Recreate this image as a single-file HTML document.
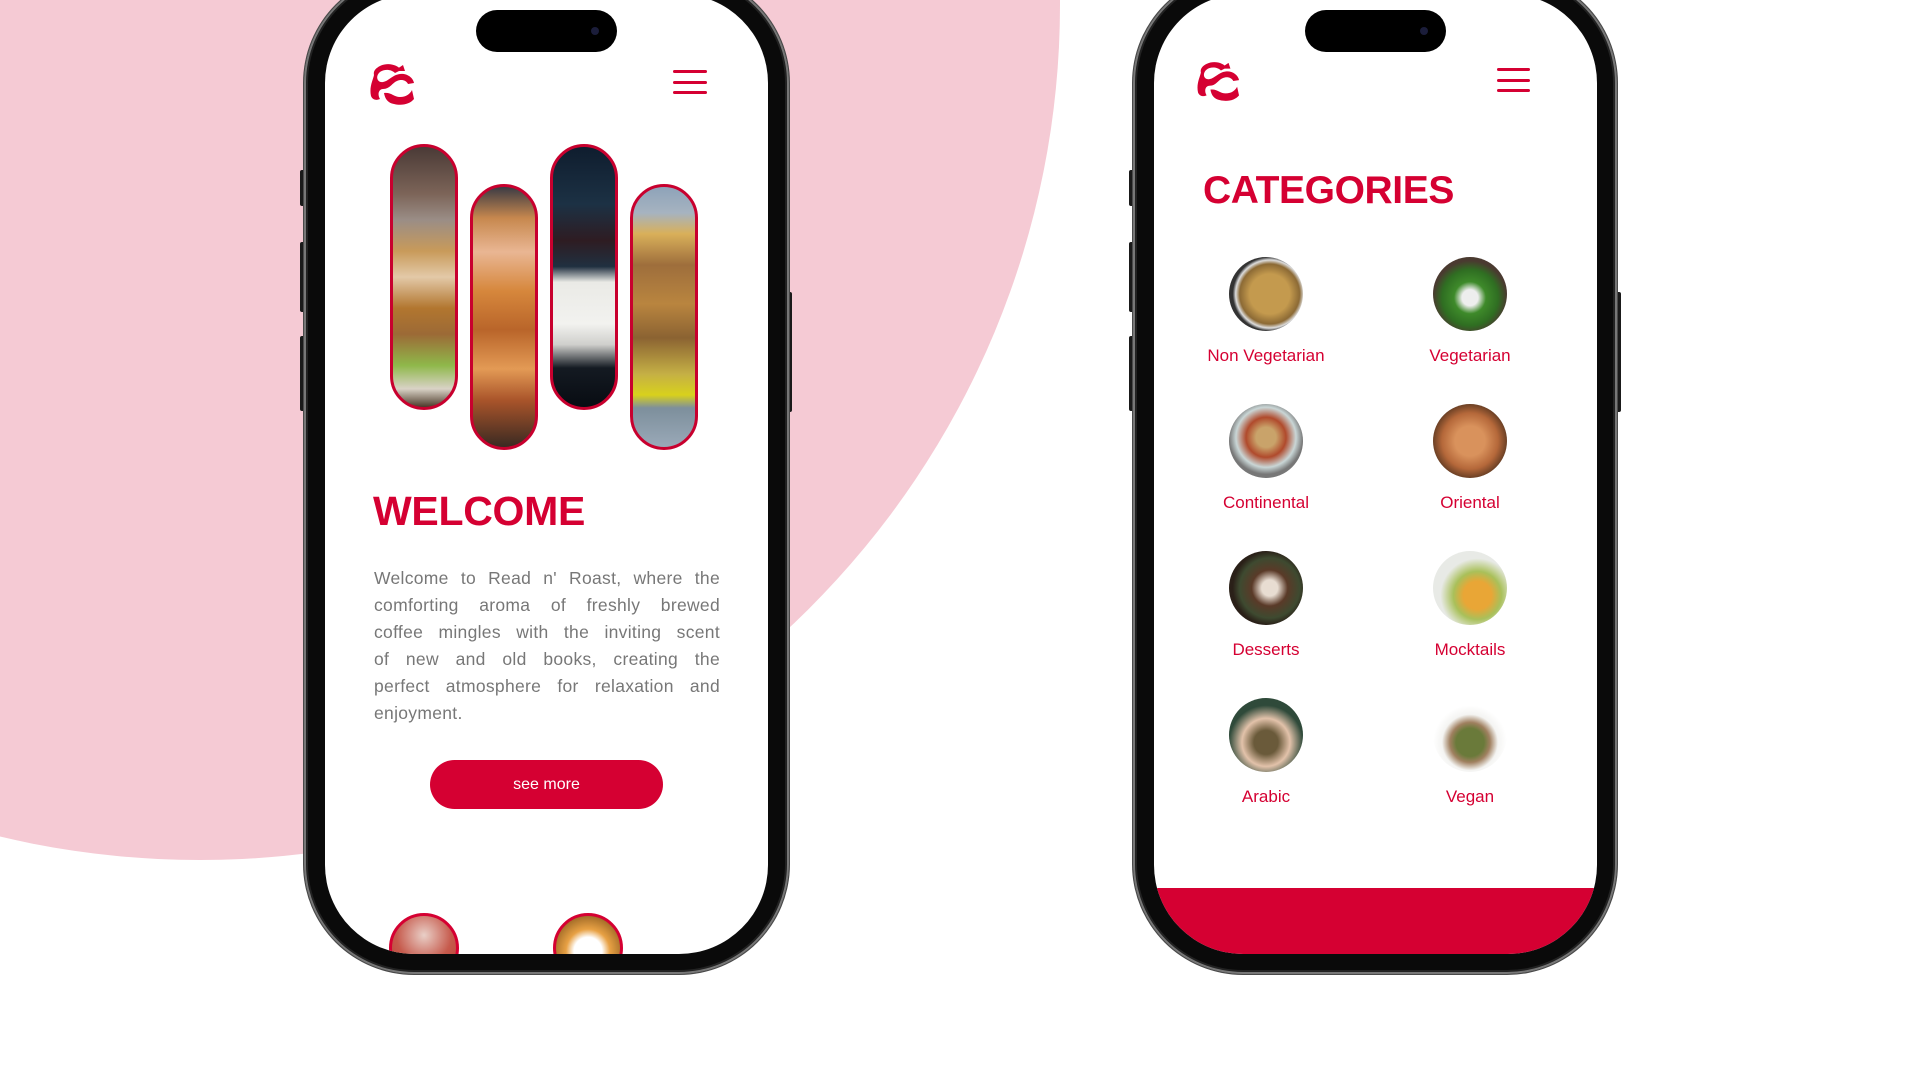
<!DOCTYPE html>
<html><head><meta charset="utf-8"><style>
*{margin:0;padding:0;box-sizing:border-box}
body{width:1920px;height:1080px;background:#fff;position:relative;overflow:hidden;font-family:"Liberation Sans",sans-serif}
.blob{position:absolute;left:-660px;top:-850px;width:1720px;height:1710px;border-radius:50%;background:#f5cad4}
.phone{position:absolute;top:-27px;height:1001px;border-radius:110px;background:#0a0a0a;box-shadow:0 0 0 1px #4a4a4a, inset 0 0 0 2px #777, inset 0 0 0 4px #222}
.screen{position:absolute;top:-6px;height:960px;width:443px;border-radius:89px;background:#fff;overflow:hidden}
.notch{position:absolute;width:141px;height:42px;border-radius:21px;background:#000;top:10px}
.notch i{position:absolute;right:18px;top:17px;width:8px;height:8px;border-radius:50%;background:#1b1d3a}
.btn{position:absolute;background:#1a1a1a;width:5px;border-radius:2px}
.abs{position:absolute}
.ham{position:absolute;width:34px}
.ham b{display:block;height:3px;background:#d50032;border-radius:2px;margin-bottom:7.5px}
.pill{position:absolute;width:68px;height:266px;border-radius:34px;border:3px solid #c8002e;overflow:hidden}
h1{position:absolute;color:#d50032;font-weight:bold}
.par{position:absolute;left:374px;top:565px;width:346px;font-size:17.5px;line-height:27px;color:#777;letter-spacing:0.3px}
.par div{text-align:justify;text-align-last:justify;white-space:nowrap}
.par div:last-child{text-align-last:left}
.see{position:absolute;left:430px;top:760px;width:233px;height:49px;border-radius:25px;background:#d50032;color:#fff;font-size:16px;text-align:center;line-height:49px}
.cat{position:absolute;width:74px;height:74px;border-radius:50%}
.lbl{position:absolute;width:220px;text-align:center;color:#d50032;font-size:17px;transform:translateX(-110px)}
.bc{position:absolute;width:70px;height:70px;border-radius:50%;border:3px solid #d50032}
</style></head><body>
<div class="blob"></div>

<!-- left phone -->
<div class="btn" style="left:300px;top:170px;height:36px"></div>
<div class="btn" style="left:300px;top:242px;height:70px"></div>
<div class="btn" style="left:300px;top:336px;height:75px"></div>
<div class="btn" style="left:787px;top:292px;height:120px"></div>
<div class="phone" style="left:304px;width:485px"></div>
<div class="screen" style="left:325px">
  <div class="bc" style="left:64px;top:919px;background:radial-gradient(circle at 50% 30%,#e9cfc7,#c65a4c 50%,#b8332b)"></div>
  <div class="bc" style="left:228px;top:919px;background:radial-gradient(circle at 50% 55%,#fff 0 14px,#e8a144 22px,#8b5a1e 40px)"></div>
</div>
<div class="notch" style="left:476px"><i></i></div>
<svg class="abs" style="left:370px;top:63px" width="46" height="43" viewBox="0 0 46 43"><path d="M10 3C18 -1 28 2 31 7L25 10C21 6 14 6 10 9C5 13 7 20 13 19C19 18 22 12 30 11C36 10 43 14 44 20L38 21C36 17 31 16 27 18C22 20 20 26 13 26C9 26 7 31 10 36C8 37 3 38 1 33C-1 24 3 17 4 12C3 8 6 5 10 3Z M24 8L33 2L35 8Z M14 30C21 29 24 34 30 34C36 34 40 31 42 27L44 36C40 41 32 43 24 41C18 40 15 36 14 30Z" fill="#d50032"/></svg>
<div class="ham" style="left:673px;top:70px"><b></b><b></b><b></b></div>
<div class="pill" style="left:390px;top:144px;background:linear-gradient(180deg,#4a3a36 0%,#7c6458 18%,#9a8d86 28%,#c89a5a 40%,#e3c9a8 50%,#b2762f 62%,#9c6a36 72%,#8fb84a 84%,#d9d2c6 93%,#4c3a2a 100%)"></div>
<div class="pill" style="left:470px;top:184px;background:linear-gradient(180deg,#3b3b44 0%,#c7884e 12%,#e9b693 25%,#d6873c 40%,#b9652a 55%,#e39a55 70%,#a9542a 82%,#3a2a22 100%)"></div>
<div class="pill" style="left:550px;top:144px;background:linear-gradient(180deg,#0f1d2e 0%,#1c3144 22%,#2e1c22 36%,#203040 46%,#eaeae6 52%,#f2f2ef 68%,#cfcfcc 76%,#141a22 85%,#080c12 100%)"></div>
<div class="pill" style="left:630px;top:184px;background:linear-gradient(180deg,#8ea3b9 0%,#a6b3c0 10%,#d9b05a 18%,#9e6e3c 30%,#b9853f 45%,#8b6332 58%,#c5b045 72%,#d8d11c 80%,#7d8f9c 85%,#9aa9b8 100%)"></div>
<h1 style="left:373px;top:488px;font-size:41px;letter-spacing:-0.3px">WELCOME</h1>
<div class="par"><div>Welcome to Read n' Roast, where the</div><div>comforting aroma of freshly brewed</div><div>coffee mingles with the inviting scent</div><div>of new and old books, creating the</div><div>perfect atmosphere for relaxation and</div><div>enjoyment.</div></div>
<div class="see">see more</div>

<!-- right phone -->
<div class="btn" style="left:1129px;top:170px;height:36px"></div>
<div class="btn" style="left:1129px;top:242px;height:70px"></div>
<div class="btn" style="left:1129px;top:336px;height:75px"></div>
<div class="btn" style="left:1616px;top:292px;height:120px"></div>
<div class="phone" style="left:1133px;width:484px"></div>
<div class="screen" style="left:1154px">
  <div class="abs" style="left:0;top:894px;width:443px;height:70px;background:#d50032"></div>
</div>
<div class="notch" style="left:1305px"><i></i></div>
<svg class="abs" style="left:1197px;top:61px" width="44" height="41" viewBox="0 0 46 43"><path d="M10 3C18 -1 28 2 31 7L25 10C21 6 14 6 10 9C5 13 7 20 13 19C19 18 22 12 30 11C36 10 43 14 44 20L38 21C36 17 31 16 27 18C22 20 20 26 13 26C9 26 7 31 10 36C8 37 3 38 1 33C-1 24 3 17 4 12C3 8 6 5 10 3Z M24 8L33 2L35 8Z M14 30C21 29 24 34 30 34C36 34 40 31 42 27L44 36C40 41 32 43 24 41C18 40 15 36 14 30Z" fill="#d50032"/></svg>
<div class="ham" style="left:1497px;top:68px;width:33px"><b></b><b style="margin-bottom:7px"></b><b></b></div>
<h1 style="left:1203px;top:169px;font-size:39px;letter-spacing:-0.4px">CATEGORIES</h1>

<div class="cat" style="left:1229px;top:257px;background:radial-gradient(circle at 55% 50%,#c49a4e 0 20px,#8c6a35 30px,#ddd 34px,#333 37px)"></div>
<div class="cat" style="left:1433px;top:257px;background:radial-gradient(circle at 50% 55%,#eee 0 8px,#3e8a2a 16px,#2f6e22 28px,#4a3a30 37px)"></div>
<div class="cat" style="left:1229px;top:404px;background:radial-gradient(circle at 50% 45%,#c9a36a 0 10px,#b04a2c 20px,#c9d6d6 30px,#777 37px)"></div>
<div class="cat" style="left:1433px;top:404px;background:radial-gradient(circle,#d9925c 0 15px,#b5683a 28px,#6b4025 37px)"></div>
<div class="cat" style="left:1229px;top:551px;background:radial-gradient(circle at 55% 50%,#e8ddd2 0 8px,#5a3a28 18px,#3e4a30 30px,#2a2018 37px)"></div>
<div class="cat" style="left:1433px;top:551px;background:radial-gradient(circle at 60% 60%,#e9a636 0 14px,#a9c05a 24px,#e8eae6 37px)"></div>
<div class="cat" style="left:1229px;top:698px;background:radial-gradient(circle at 50% 60%,#6a5a3a 0 12px,#e2c2aa 24px,#2f4a3a 37px)"></div>
<div class="cat" style="left:1433px;top:698px;background:radial-gradient(circle at 50% 60%,#6a7a3a 0 14px,#a08060 20px,#f4f4f2 28px,#fff 37px)"></div>

<div class="lbl" style="left:1266px;top:346px">Non Vegetarian</div>
<div class="lbl" style="left:1470px;top:346px">Vegetarian</div>
<div class="lbl" style="left:1266px;top:493px">Continental</div>
<div class="lbl" style="left:1470px;top:493px">Oriental</div>
<div class="lbl" style="left:1266px;top:640px">Desserts</div>
<div class="lbl" style="left:1470px;top:640px">Mocktails</div>
<div class="lbl" style="left:1266px;top:787px">Arabic</div>
<div class="lbl" style="left:1470px;top:787px">Vegan</div>
</body></html>
